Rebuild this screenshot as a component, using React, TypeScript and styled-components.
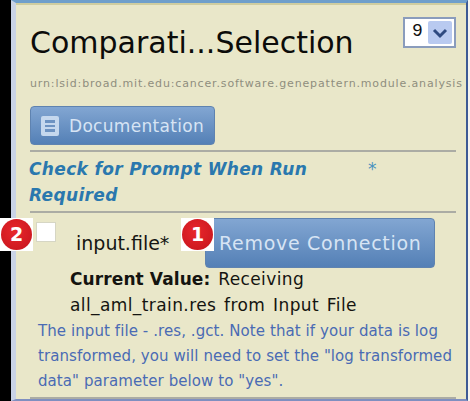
import React from 'react'
import styled, { createGlobalStyle } from 'styled-components'

const GlobalStyle = createGlobalStyle`
	html, body {
		margin: 0;
		padding: 0;
		width: 470px;
		height: 401px;
		overflow: hidden;
		background: #fff;
	}
`

const Page = styled.div`
	width: 470px;
	height: 401px;
	display: flex;
	font-family: 'DejaVu Sans', sans-serif;
	background: #000;
`

const Frame = styled.div`
	margin-left: 11px;
	width: 457px;
	height: 401px;
	box-sizing: border-box;
	background: #e9e7c9;
	border-top: 3px solid #6f9fcb;
	border-left: 5px solid #c9d3e6;
	border-right: 2px solid #3d5a94;
	border-bottom: 2px solid #7f8fc0;
	box-shadow: 2px 0 0 #f4f4f0, inset 0 2px 0 #cfcda0;
	padding: 0 10px 0 14px;
`

const TitleRow = styled.div`
	display: flex;
	justify-content: space-between;
	align-items: flex-start;
	height: 75px;
	padding-top: 13px;
	box-sizing: border-box;
`

const Title = styled.h1`
	margin: 9px 0 0;
	font-size: 30px;
	line-height: 36px;
	font-weight: 400;
	color: #0c0c0a;
`

const VersionSelect = styled.div`
	width: 53px;
	height: 31px;
	margin-top: 1px;
	box-sizing: border-box;
	border: 2px solid #8a9cbc;
	background: #fff;
	display: flex;
	justify-content: space-between;
	padding: 2px;
	font-family: 'Liberation Mono', monospace;
	font-size: 18px;
	line-height: 20px;
	color: #111;
`

const VersionValue = styled.span`
	padding-left: 5px;
`

const VersionArrow = styled.span`
	width: 24px;
	background: #b9caf0;
	border-radius: 2px;
	display: flex;
	align-items: center;
	justify-content: center;
`

const Urn = styled.div`
	font-size: 11px;
	line-height: 12px;
	color: #8f8e7e;
	letter-spacing: 0.85px;
	white-space: nowrap;
	margin-bottom: 16px;
`

const Button = styled.div<{ $wide?: boolean }>`
	box-sizing: border-box;
	display: flex;
	align-items: center;
	color: #d7e4f4;
	background: linear-gradient(#82a6d2, #5480b6);
	border: 1px solid #5f83b0;
	border-radius: 4px;
	font-size: ${(p) => (p.$wide ? '19px' : '17px')};
	letter-spacing: ${(p) => (p.$wide ? '0.7px' : '0.3px')};
	width: ${(p) => (p.$wide ? '230px' : '185px')};
	height: ${(p) => (p.$wide ? '50px' : '39px')};
	padding-left: ${(p) => (p.$wide ? '13px' : '8px')};
	gap: 8px;
	white-space: nowrap;
`

const DocIcon = styled.svg`
	width: 22px;
	height: 24px;
	flex: none;
`

const Rule = styled.div<{ $top: number }>`
	height: 2px;
	background: #abaca4;
	margin-top: ${(p) => p.$top}px;
`

const PromptRow = styled.div`
	display: flex;
	margin: 4px 0 0 -1px;
	height: 52px;
	color: #2a78ae;
	font-size: 17px;
	line-height: 26px;
	font-weight: 700;
	font-style: italic;
	letter-spacing: 0.35px;
`

const PromptLabel = styled.div`
	width: 339px;
`

const Asterisk = styled.span`
	margin-top: 3px;
	font-weight: 400;
	font-style: normal;
	color: #4a92be;
	font-size: 17px;
	line-height: 20px;
`

const ConnectionRow = styled.div`
	display: flex;
	align-items: flex-start;
	margin-top: 5px;
	position: relative;
`

const Checkbox = styled.div`
	box-sizing: border-box;
	width: 20px;
	height: 20px;
	background: #fff;
	border: 1px solid #d6d6c4;
	margin: 4px 0 0 6px;
	flex: none;
`

const FileLabel = styled.div`
	font-size: 19px;
	line-height: 24px;
	color: #151512;
	margin: 13px 0 0 20px;
	width: 129px;
	flex: none;
`

const Badge = styled.span<{ $left: number }>`
	position: absolute;
	left: ${(p) => p.$left}px;
	top: 0;
	width: 33px;
	height: 33px;
	background: #fff;
	display: flex;
	align-items: center;
	justify-content: center;
`

const BadgeDot = styled.span`
	width: 31px;
	height: 31px;
	border-radius: 50%;
	background: radial-gradient(circle at 45% 40%, #e8262c, #c4141b);
	color: #fff;
	font-size: 19px;
	line-height: 31px;
	font-weight: 700;
	text-align: center;
`

const CurrentValue = styled.div`
	margin: -2px 0 1px 40px;
	font-size: 17px;
	line-height: 26px;
	color: #141410;
	letter-spacing: 0.4px;
	word-spacing: 2px;
	white-space: nowrap;
`

const Strong = styled.strong`
	font-weight: 700;
	letter-spacing: 0.1px;
	word-spacing: 0;
`

const Description = styled.p`
	margin: 0 0 0 8px;
	font-size: 15px;
	line-height: 25px;
	letter-spacing: 0.08px;
	color: #4a6bb4;
	white-space: nowrap;
`

export default function App() {
	return (
		<Page>
			<GlobalStyle />
			<Frame>
				<TitleRow>
					<Title>Comparati...Selection</Title>
					<VersionSelect>
						<VersionValue>9</VersionValue>
						<VersionArrow>
							<svg width="16" height="12" viewBox="0 0 16 12">
								<path d="M2 3l6 6 6-6" fill="none" stroke="#2f4a80" strokeWidth="3" />
							</svg>
						</VersionArrow>
					</VersionSelect>
				</TitleRow>
				<Urn>urn:lsid:broad.mit.edu:cancer.software.genepattern.module.analysis</Urn>
				<Button>
					<DocIcon viewBox="0 0 22 24">
						<rect x="2" y="2" width="18" height="20" rx="2" fill="#c5d8ee" />
						<rect x="6" y="6" width="10" height="12" fill="#6d93c2" />
						<path d="M6 10h10M6 14h10" stroke="#c5d8ee" strokeWidth="2" />
					</DocIcon>
					Documentation
				</Button>
				<Rule $top={5} />
				<PromptRow>
					<PromptLabel>
						Check for Prompt When Run
						<br />
						Required
					</PromptLabel>
					<Asterisk>*</Asterisk>
				</PromptRow>
				<Rule $top={3} />
				<ConnectionRow>
					<Checkbox />
					<FileLabel>input.file*</FileLabel>
					<Button $wide>Remove Connection</Button>
					<Badge $left={-30}>
						<BadgeDot>2</BadgeDot>
					</Badge>
					<Badge $left={151}>
						<BadgeDot>1</BadgeDot>
					</Badge>
				</ConnectionRow>
				<CurrentValue>
					<Strong>Current Value:</Strong> Receiving
					<br />
					all_aml_train.res from Input File
				</CurrentValue>
				<Description>
					The input file - .res, .gct. Note that if your data is log
					<br />
					transformed, you will need to set the "log transformed
					<br />
					data" parameter below to "yes".
				</Description>
				<Rule $top={3} />
			</Frame>
		</Page>
	)
}
